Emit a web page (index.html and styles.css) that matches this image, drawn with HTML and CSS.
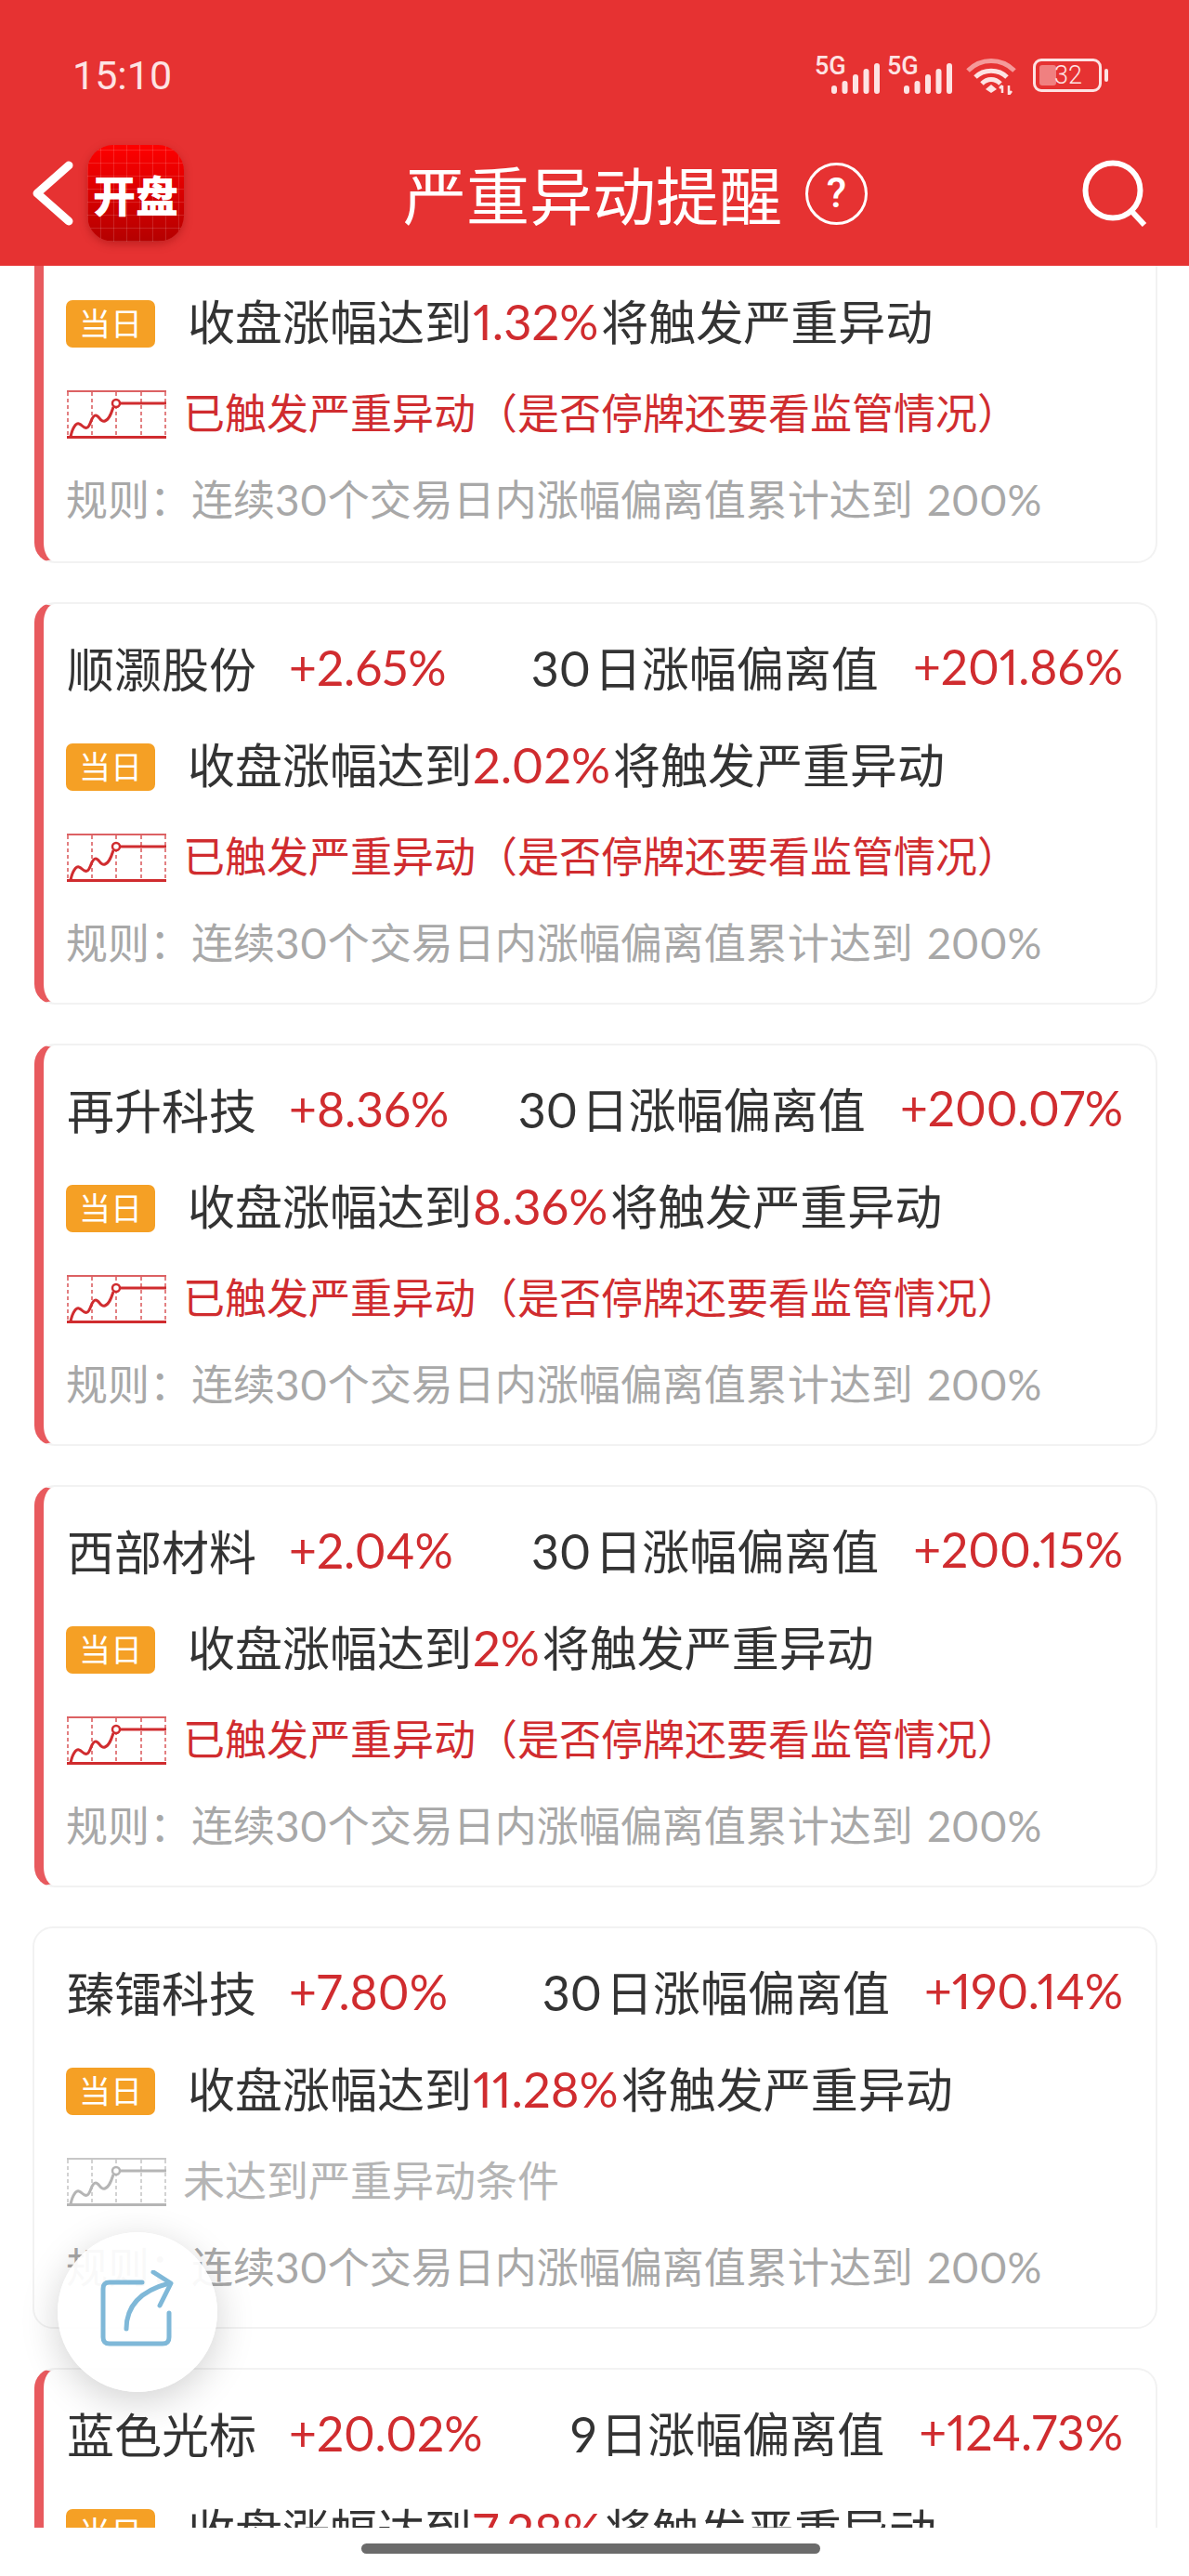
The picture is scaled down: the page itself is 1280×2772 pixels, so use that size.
FILE: index.html
```html
<!DOCTYPE html>
<html lang="zh-CN">
<head>
    <meta charset="UTF-8">
    <meta name="viewport" content="width=device-width, initial-scale=1.0">
    <title>严重异动提醒</title>
    <link rel="stylesheet" href="styles.css">
</head>
<body>

    <svg class="defs" width="0" height="0">
        <symbol id="trend" viewBox="0 0 107 52">
            <path d="M0 1H107" stroke="currentColor" stroke-width="1.5" fill="none"/>
            <path d="M1 2V50M27 2V50M53 2V50M80 2V50M106 2V50" stroke="currentColor" stroke-width="1.2" stroke-dasharray="4 3" fill="none"/>
            <path d="M0 50.5H107" stroke="currentColor" stroke-width="3" fill="none"/>
            <path d="M4 50C6 40 10 35 13 36C17 37 18 42 22 40C26 38 26 27 31 27C35 27 36 35 41 33C46 31 48 24 50 18" stroke="currentColor" stroke-width="3" fill="none"/>
            <circle cx="53" cy="14" r="4" stroke="currentColor" stroke-width="2.5" fill="#fff"/>
            <path d="M57 14H107" stroke="currentColor" stroke-width="3" fill="none"/>
        </symbol>
    </svg>

    <header class="top">
        <div class="status">
            <span class="time">15:10</span>
            <div class="status-icons">
                <div class="net">
                    <span class="net-label">5G</span>
                    <svg class="bars" width="52" height="33" viewBox="0 0 52 33"><path d="M3 30V27M14.5 30V22M26 30V15M37.5 30V9M49 30V3" stroke="#fde3e3" stroke-width="6" stroke-linecap="round" fill="none"/></svg>
                </div>
                <div class="net">
                    <span class="net-label">5G</span>
                    <svg class="bars" width="52" height="33" viewBox="0 0 52 33"><path d="M3 30V27M14.5 30V22M26 30V15M37.5 30V9M49 30V3" stroke="#fde3e3" stroke-width="6" stroke-linecap="round" fill="none"/></svg>
                </div>
                <svg class="wifi" width="56" height="40" viewBox="0 0 56 40">
                    <path d="M3 14C17 0 39 0 53 14" stroke="#f59a9a" stroke-width="5" fill="none"/>
                    <path d="M11 21C20 12 36 12 45 21" stroke="#fde3e3" stroke-width="5" fill="none"/>
                    <path d="M18 28C24 22 32 22 38 28" stroke="#fde3e3" stroke-width="5" fill="none"/>
                    <path d="M22 34L28 29L34 34L28 38Z" fill="#fde3e3"/>
                    <path d="M40 38V30M40 30L37 33M47 30V40M47 40L50 36" stroke="#fde3e3" stroke-width="2.5" fill="none"/>
                </svg>
                <div class="battery">
                    <div class="battery-body">
                        <span class="battery-fill"></span>
                        <span class="battery-num">32</span>
                    </div>
                    <span class="battery-nub"></span>
                </div>
            </div>
        </div>
        <div class="nav">
            <svg class="back" width="46" height="70" viewBox="0 0 46 70"><path d="M40 5L6 35L40 65" stroke="#fff" stroke-width="9" stroke-linecap="round" stroke-linejoin="round" fill="none"/></svg>
            <div class="logo">开盘</div>
            <h1 class="title">严重异动提醒</h1>
            <div class="help">?</div>
            <svg class="search" width="72" height="72" viewBox="0 0 72 72">
                <circle cx="33" cy="33" r="29.5" stroke="#fff" stroke-width="6" fill="none"/>
                <path d="M53 55L67 70" stroke="#fff" stroke-width="6" fill="none"/>
            </svg>
        </div>
    </header>

    <main class="list">

        <section class="card hot cut">
            <div class="today">
                <span class="badge">当日</span>
                <span class="today-text">收盘涨幅达到<em>1.32%</em>将触发严重异动</span>
            </div>
            <div class="alert">
                <svg class="trend"><use href="#trend"/></svg>
                <span class="alert-text">已触发严重异动（是否停牌还要看监管情况）</span>
            </div>
            <div class="rule"><span class="rule-label">规则：</span>连续<span class="num">30</span>个交易日内涨幅偏离值累计达到 <span class="num">200%</span></div>
        </section>

        <section class="card hot">
            <div class="head">
                <div class="stock"><span class="name">顺灏股份</span><em>+2.65%</em></div>
                <div class="dev"><span><span class="num">30</span>日涨幅偏离值</span><em>+201.86%</em></div>
            </div>
            <div class="today">
                <span class="badge">当日</span>
                <span class="today-text">收盘涨幅达到<em>2.02%</em>将触发严重异动</span>
            </div>
            <div class="alert">
                <svg class="trend"><use href="#trend"/></svg>
                <span class="alert-text">已触发严重异动（是否停牌还要看监管情况）</span>
            </div>
            <div class="rule"><span class="rule-label">规则：</span>连续<span class="num">30</span>个交易日内涨幅偏离值累计达到 <span class="num">200%</span></div>
        </section>

        <section class="card hot">
            <div class="head">
                <div class="stock"><span class="name">再升科技</span><em>+8.36%</em></div>
                <div class="dev"><span><span class="num">30</span>日涨幅偏离值</span><em>+200.07%</em></div>
            </div>
            <div class="today">
                <span class="badge">当日</span>
                <span class="today-text">收盘涨幅达到<em>8.36%</em>将触发严重异动</span>
            </div>
            <div class="alert">
                <svg class="trend"><use href="#trend"/></svg>
                <span class="alert-text">已触发严重异动（是否停牌还要看监管情况）</span>
            </div>
            <div class="rule"><span class="rule-label">规则：</span>连续<span class="num">30</span>个交易日内涨幅偏离值累计达到 <span class="num">200%</span></div>
        </section>

        <section class="card hot">
            <div class="head">
                <div class="stock"><span class="name">西部材料</span><em>+2.04%</em></div>
                <div class="dev"><span><span class="num">30</span>日涨幅偏离值</span><em>+200.15%</em></div>
            </div>
            <div class="today">
                <span class="badge">当日</span>
                <span class="today-text">收盘涨幅达到<em>2%</em>将触发严重异动</span>
            </div>
            <div class="alert">
                <svg class="trend"><use href="#trend"/></svg>
                <span class="alert-text">已触发严重异动（是否停牌还要看监管情况）</span>
            </div>
            <div class="rule"><span class="rule-label">规则：</span>连续<span class="num">30</span>个交易日内涨幅偏离值累计达到 <span class="num">200%</span></div>
        </section>

        <section class="card">
            <div class="head">
                <div class="stock"><span class="name">臻镭科技</span><em>+7.80%</em></div>
                <div class="dev"><span><span class="num">30</span>日涨幅偏离值</span><em>+190.14%</em></div>
            </div>
            <div class="today">
                <span class="badge">当日</span>
                <span class="today-text">收盘涨幅达到<em>11.28%</em>将触发严重异动</span>
            </div>
            <div class="alert off">
                <svg class="trend"><use href="#trend"/></svg>
                <span class="alert-text">未达到严重异动条件</span>
            </div>
            <div class="rule"><span class="rule-label">规则：</span>连续<span class="num">30</span>个交易日内涨幅偏离值累计达到 <span class="num">200%</span></div>
        </section>

        <section class="card hot">
            <div class="head">
                <div class="stock"><span class="name">蓝色光标</span><em>+20.02%</em></div>
                <div class="dev"><span><span class="num">9</span>日涨幅偏离值</span><em>+124.73%</em></div>
            </div>
            <div class="today">
                <span class="badge">当日</span>
                <span class="today-text">收盘涨幅达到<em>7.28%</em>将触发严重异动</span>
            </div>
        </section>

    </main>

    <div class="fab">
        <svg width="80" height="82" viewBox="0 0 80 82" fill="none" stroke="#7fb8d8" stroke-width="5" stroke-linecap="round" stroke-linejoin="round">
            <path d="M45 13H10C5 13 3 15 3 20V72C3 77 5 79 10 79H67C72 79 74 77 74 72V46"/>
            <path d="M28 63C28 42 40 23 74 14"/>
            <path d="M57 2L76 14L64 38"/>
        </svg>
    </div>

    <div class="home"><span class="home-bar"></span></div>

</body>
</html>
```

FILE: styles.css
```css
/* Global */
* {
    box-sizing: border-box;
}

body {
    margin: 0;
    width: 1280px;
    height: 2772px;
    overflow: hidden;
    position: relative;
    background-color: #fff;
    color: #333;
    font-family: "Noto Sans CJK SC", "Noto Sans", sans-serif;
}

em, .num {
    font-style: normal;
    font-family: "Lato", "Noto Sans CJK SC", sans-serif;
    font-variant-numeric: proportional-nums;
}

em {
    color: #d02c2f;
}

.defs {
    position: absolute;
}

/* Red header */
.top {
    height: 286px;
    background-color: #e63232;
    color: #fff;
}

.status {
    height: 130px;
    padding: 56px 87px 0 78px;
    display: flex;
    justify-content: space-between;
    align-items: flex-start;
}

.time {
    font-family: "Roboto", sans-serif;
    font-size: 43px;
    line-height: 50px;
    color: #fde3e3;
}

.status-icons {
    display: flex;
    align-items: flex-start;
    padding-top: 4px;
}

.net {
    display: flex;
    width: 70px;
    height: 40px;
    margin-right: 8px;
    position: relative;
    justify-content: flex-end;
    align-items: flex-end;
}

.net-label {
    position: absolute;
    left: 0;
    top: 0;
    font-family: "Roboto", sans-serif;
    font-weight: 500;
    font-size: 27px;
    line-height: 22px;
    color: #fde3e3;
}

.bars {
    margin-bottom: -1px;
}

.wifi {
    margin-left: 6px;
    margin-top: 2px;
}

.battery {
    display: flex;
    align-items: center;
    margin-left: 17px;
    margin-top: 3px;
}

.battery-body {
    width: 74px;
    height: 36px;
    border: 3px solid #fde3e3;
    border-radius: 9px;
    position: relative;
    display: flex;
    justify-content: flex-end;
    align-items: center;
    padding-right: 18px;
}

.battery-fill {
    position: absolute;
    left: 4px;
    top: 4px;
    bottom: 4px;
    width: 18px;
    background-color: #f08080;
    border-radius: 3px;
}

.battery-num {
    position: relative;
    font-family: "Roboto", sans-serif;
    font-size: 27px;
    font-weight: 300;
    color: #fde3e3;
}

.battery-nub {
    width: 4px;
    height: 14px;
    margin-left: 3px;
    border-radius: 2px;
    background-color: #fde3e3;
}

.nav {
    height: 156px;
    padding: 0 43px 0 34px;
    display: flex;
    align-items: center;
}

.back {
    flex: none;
}

.logo {
    flex: none;
    width: 104px;
    height: 104px;
    margin-left: 14px;
    border-radius: 28px;
    background:
        repeating-linear-gradient(90deg, rgba(255, 255, 255, 0.14) 0 1px, transparent 1px 14px),
        repeating-linear-gradient(0deg, rgba(255, 255, 255, 0.14) 0 1px, transparent 1px 14px),
        linear-gradient(#ff0000, #b40000);
    box-shadow: 0 3px 10px rgba(120, 0, 0, 0.35);
    font-size: 46px;
    font-weight: 900;
    line-height: 104px;
    text-align: center;
    white-space: nowrap;
}

.title {
    margin: 0 0 0 236px;
    font-size: 68px;
    font-weight: 400;
    line-height: 90px;
    white-space: nowrap;
}

.help {
    flex: none;
    width: 67px;
    height: 67px;
    margin-left: 25px;
    border: 3px solid #fff;
    border-radius: 50%;
    font-family: "Roboto", sans-serif;
    font-size: 44px;
    font-weight: 500;
    line-height: 61px;
    text-align: center;
}

.search {
    flex: none;
    margin-left: auto;
}

/* Card list */
.list {
    height: 2434px;
    overflow: hidden;
}

.card {
    margin: 0 34px 42px 35px;
    height: 433px;
    padding: 36px 35px 0 34px;
    border: 2px solid #f2f2f2;
    border-radius: 22px;
    background-color: #fff;
}

.card.hot {
    margin-left: 37px;
    padding-left: 24px;
    border-left: 10px solid #e85a5e;
}

.card.cut {
    height: 320px;
    padding-top: 37px;
    border-top: none;
    border-top-left-radius: 0;
    border-top-right-radius: 0;
}

.head {
    height: 64px;
    margin-bottom: 50px;
    display: flex;
    justify-content: space-between;
    align-items: center;
    font-size: 51px;
    line-height: 64px;
    white-space: nowrap;
}

.stock, .dev {
    display: flex;
    gap: 37px;
}

.stock {
    padding-left: 1px;
    gap: 35px;
}

.head em {
    font-size: 51.5px;
}

.head .num {
    font-size: 52px;
    margin-right: 4px;
}

.today {
    height: 51px;
    margin-bottom: 46px;
    display: flex;
    align-items: center;
    gap: 35px;
    white-space: nowrap;
}

.badge {
    flex: none;
    width: 96px;
    height: 51px;
    padding-bottom: 4px;
    border-radius: 7px;
    background-color: #f5a025;
    color: #fff;
    font-size: 34px;
    line-height: 47px;
    text-align: center;
}

.today-text {
    margin-top: -8px;
    font-size: 51px;
    line-height: 51px;
}

.today-text em {
    padding: 0 3px 0 1px;
    font-size: 52.5px;
}

.alert {
    height: 52px;
    margin-bottom: 42px;
    padding-left: 1px;
    display: flex;
    align-items: center;
    gap: 18px;
    color: #d02c2f;
    font-size: 45px;
    white-space: nowrap;
}

.alert-text {
    margin-top: -8px;
}

.alert.off {
    color: #b5b5b5;
}

.trend {
    flex: none;
    width: 107px;
    height: 52px;
}

.rule {
    height: 50px;
    margin-top: -3px;
    color: #a8a8a8;
    font-size: 45px;
    line-height: 50px;
    white-space: nowrap;
}

.rule .num {
    font-size: 46px;
}

.rule .num:last-child {
    margin-left: 5px;
}

.rule-label {
    display: inline-block;
    width: 135px;
}

/* Floating share button */
.fab {
    position: absolute;
    left: 62px;
    top: 2402px;
    width: 172px;
    height: 172px;
    padding-bottom: 9px;
    border-radius: 50%;
    background-color: rgba(255, 255, 255, 0.93);
    box-shadow: 0 10px 40px rgba(0, 0, 0, 0.18);
    display: flex;
    justify-content: center;
    align-items: center;
}

/* Gesture bar */
.home {
    height: 52px;
    padding: 17px 8px 0 0;
    display: flex;
    justify-content: center;
    background-color: #fff;
}

.home-bar {
    width: 494px;
    height: 11px;
    border-radius: 6px;
    background-color: #6b6b6b;
}
```
